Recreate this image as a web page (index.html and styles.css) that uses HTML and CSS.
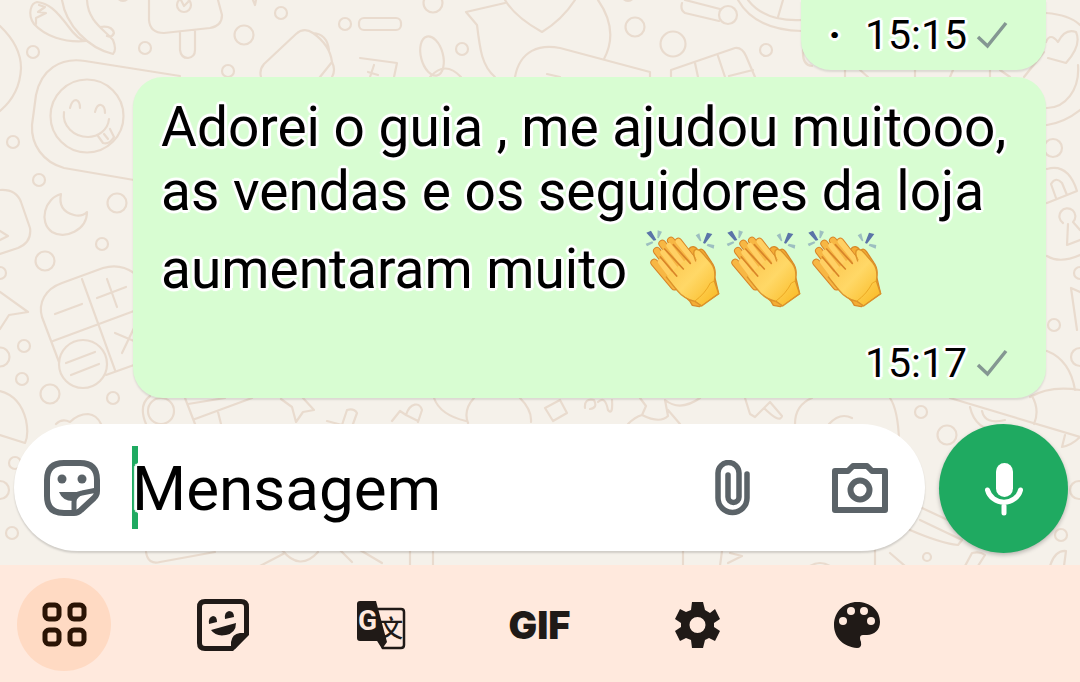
FILE: index.html
```html
<!DOCTYPE html>
<html lang="pt-BR">
<head>
<meta charset="utf-8">
<meta name="viewport" content="width=device-width, initial-scale=1">
<title>Conversa</title>
<link rel="stylesheet" href="styles.css">
</head>
<body>
<svg class="defs" width="0" height="0" aria-hidden="true">
  <defs>
    <linearGradient id="skin" x1="0" y1="0" x2="1" y2="1">
      <stop offset="0" stop-color="#fbc24a"/>
      <stop offset=".5" stop-color="#ffd867"/>
      <stop offset="1" stop-color="#f9b81f"/>
    </linearGradient>
    <symbol id="clap" viewBox="50 28 243 255">
      <path d="M66 57 L80 51 L96 79 L88 81Z M264 61 L248 57 L236 88 L242 90Z" fill="#5b74a8"/>
      <path d="M100 50 L113 54 L103 74 L99 73Z M64 90 L84 83 L87 88 L68 98Z M214 65 L225 59 L231 82 L227 83Z M270 94 L250 90 L247 96 L268 105Z" fill="#9dbfc0"/>
      <g stroke-linecap="round" stroke-linejoin="round">
        <path d="M187 120 Q193 98 207 99 Q217 101 222 112 Q230 100 240 113 L262 146 Q276 165 271 190 L283 240 L225 279 L204 275 L196 262 L120 190Z" fill="#f4ad35" stroke="#d88a28" stroke-width="4"/>
        <path d="M90 147 L150 218 M98 112 L165 200 M114 90 L180 178 M140 81 L195 150 M162 84 L214 152" fill="none" stroke="#d88428" stroke-width="24"/>
        <path d="M90 147 L150 218 M98 112 L165 200 M114 90 L180 178 M140 81 L195 150 M162 84 L214 152" fill="none" stroke="#f7b744" stroke-width="18"/>
        <path d="M108 144 L156 208 M116 116 L172 190 M134 96 L190 170 M162 84 L214 148" fill="none" stroke="#ffd064" stroke-width="16"/>
        <path d="M140 176 L184 138 L216 150 Q222 146 214 132 Q205 112 216 108 Q226 108 234 119 L260 149 Q276 168 270 200 L281 239 L232 275 L212 262 Q180 255 160 229 L128 190Z" fill="url(#skin)"/>
        <path d="M214 142 Q202 112 214 107 Q225 106 234 118 L260 148 Q276 168 270 202 L283 240 L232 277 L212 263 Q180 257 158 230 L126 190" fill="none" stroke="#dc932a" stroke-width="4"/>
        <path d="M108 130 L157 187 M121 106 L177 166 M147 93 L198 149" fill="none" stroke="#d88428" stroke-width="5"/>
        <path d="M212 262 Q242 240 258 208 L270 202" fill="none" stroke="#eca823" stroke-width="3"/>
      </g>
    </symbol>
    <symbol id="check" viewBox="0 0 32 28">
      <path d="M2 16 L11.500 25 L30 2" fill="none" stroke="#849792" stroke-width="3.500"/>
    </symbol>
  </defs>
</svg>

<main class="chat">
  <svg class="wallpaper" width="1080" height="566" viewBox="0 0 1080 566" aria-hidden="true">
    <g fill="none" stroke="#e9dbce" stroke-width="2.200" stroke-linecap="round" stroke-linejoin="round">
      <g>
        <circle cx="33" cy="52" r="6"/><circle cx="145" cy="48" r="6"/><circle cx="244" cy="35" r="9.500"/>
        <circle cx="228" cy="71" r="6"/><circle cx="281" cy="13" r="6"/><circle cx="345" cy="24" r="6"/>
        <circle cx="13" cy="142" r="6"/><circle cx="39" cy="180" r="6"/><circle cx="117" cy="203" r="9.500"/>
        <circle cx="123" cy="-5" r="6"/><circle cx="45" cy="261" r="9.500"/><circle cx="102" cy="244" r="6"/>
        <circle cx="0" cy="273" r="6"/><circle cx="24" cy="346" r="6"/><circle cx="0" cy="357" r="9.500"/>
        <circle cx="22" cy="379" r="6"/><circle cx="50" cy="394" r="9.500"/><circle cx="113" cy="398" r="6"/>
        <circle cx="15" cy="463" r="6"/><circle cx="0" cy="490" r="9"/><circle cx="12" cy="533" r="6"/>
        <circle cx="433" cy="3" r="9.500"/><circle cx="462" cy="49" r="6"/><circle cx="635" cy="27" r="9.500"/>
        <circle cx="673" cy="44" r="12.500"/><circle cx="766" cy="50" r="6"/><circle cx="628" cy="-5" r="6"/>
        <circle cx="921" cy="412" r="6"/><circle cx="947" cy="435" r="9.500"/><circle cx="927" cy="557" r="4"/>
        <circle cx="1061" cy="535" r="6"/><circle cx="1079" cy="490" r="9"/><circle cx="1053" cy="148" r="9"/>
        <circle cx="1054" cy="325" r="6"/><circle cx="1080" cy="273" r="6"/><circle cx="1080" cy="357" r="9"/>
      </g>
      <path d="M0 26 Q21 46 21 68 Q20 94 0 111"/>
      <path d="M34 24 C27 14 31 3 37 2 C48 3 56 10 68 26 Q78 40 86 41 C64 43 45 36 34 24Z M39 5 L45 7 L38 12 L46 13 L36 18 L36 24"/>
      <path d="M62 0 C66 25 88 48 113 54 Q117 50 113 40 C105 30 88 22 87 0 M100 27 Q112 25 114 33 Q112 38 107 36"/>
      <path d="M149 0 V20 Q150 33 164 33 L210 28 Q222 26 222 15 L218 0 M180 33 V50 Q181 58 188 58 Q195 57 195 50 V31"/>
      <circle cx="184" cy="5" r="7"/><path d="M181 0 L184 6 L188 2"/>
      <path d="M180 76 L85 61 C60 57 41 70 36 95 L32 125 C31 145 43 162 64 168 L134 180"/>
      <circle cx="87" cy="116" r="36.500"/>
      <path d="M70 108 Q72 100 76 100 Q80 101 80 108 M95 112 Q97 104 101 105 Q105 106 105 113 M64 112 C62 126 74 137 88 137 C98 137 108 130 109 119 M98 136 L103 143 Q109 145 114 137 L110 129 M104 134 L108 139"/>
      <path d="M261 77 Q259 70 264 64 L296 34 Q304 27 313 33 Q330 45 332 62 L320 77 M313 33 Q327 34 329 50 M332 62 Q336 70 332 77 M253 0 L255 5 L256 0"/>
      <path d="M61 194 C45 198 38 222 52 232 C65 240 87 230 87 212 Q82 217 74 215 C62 212 59 204 61 194Z"/>
      <path d="M0 190 Q16 189 21 202 L30 228 Q32 242 18 248 L0 254 M0 231 L8 236 L0 240 M0 292 L28 312 L9 315 L0 329"/>
      <path d="M134 273 Q120 263 103 268 L62 283 C45 289 38 303 42 317 L59 362 M82 279 L115 370 M53 341 L134 311 M106 375 L134 365 M55 314 L82 304 M97 298 L126 287 M107 279 L117 307 M115 333 L134 341 M134 328 L122 353"/>
      <circle cx="83" cy="364" r="24"/><path d="M66 363 L95 352 M71 375 L99 364"/>
      <path d="M0 391 Q20 396 26 420 Q29 435 25 443 L0 435 M56 424 Q62 418 70 422 Q78 414 88 414 Q97 415 101 424"/>
      <path d="M150 396 Q138 405 146 424 M185 398 L195 424 M188 404 L225 398 M195 419 L252 398 M218 412 L221 424 M281 399 L292 407 L296 422 L303 412 L314 410 L303 398 M327 421 L342 425 L347 410 Q354 408 357 413 L353 424"/>
      <circle cx="161" cy="411" r="13"/>
      <path d="M392 421 L400 411 L406 415 C410 402 420 402 422 410 L418 422 M406 415 L418 421 M434 398 Q440 415 466 421 M474 398 Q463 410 468 423 M520 398 Q532 410 531 422 M545 408 L560 400 L567 413 L553 421Z M585 408 Q584 398 594 400 Q598 408 590 409 M598 402 Q605 395 608 410 Q613 416 612 400"/>
      <path d="M640 398 L646 406 L642 415 Q660 424 668 416 L665 400 Q680 412 700 398 M628 424 Q635 417 642 415 M668 410 L680 424 M745 398 L750 414 L755 417 L770 402 L782 416 Q780 424 764 408 M812 398 Q795 405 795 424 M829 424 Q840 412 852 418"/>
      <rect x="359" y="18" width="42" height="12" rx="5"/>
      <ellipse cx="432" cy="56" rx="11" ry="20" transform="rotate(-15 432 56)"/>
      <path d="M430 77 Q445 60 461 77 M360 58 L397 63 L394 77 M374 65 L370 77 M368 72 L378 75"/>
      <path d="M505 3 L466 12 L477 25 C480 50 482 66 495 77 M505 0 Q515 17 542 32 Q562 20 575 0 M598 0 C612 20 614 40 604 59 M515 77 C520 50 540 44 560 48 L650 72 V77 M547 74 L560 77"/>
      <path d="M685 0 L720 9 M682 3 Q680 10 685 13 L719 21 M738 0 Q755 30 802 31 M748 0 Q765 22 802 20 M783 0 L778 17 M671 77 V70 L735 48 Q742 47 746 56 L755 77 M695 63 L698 77 M718 56 L725 77 M729 76 L753 70 M803 50 Q802 65 812 66"/>
      <circle cx="728" cy="15" r="9"/>
      <path d="M845 70 V77 M860 70 L868 77 M915 70 V77 M953 70 L950 77 M990 70 V77 M1000 70 L1010 77 M1024 77 L1044 52"/>
      <path d="M1046 13 Q1070 15 1080 25 M1046 42 Q1050 32 1058 42 Q1065 28 1076 32 Q1082 45 1066 63 L1048 58 M1078 65 C1080 90 1065 108 1047 108 M1047 125 Q1065 122 1080 110"/>
      <path d="M1047 169 Q1068 163 1077 191 L1047 203 M1056 198 L1051 184 Q1056 176 1062 183 L1067 195 M1063 223 A8 8 0 1 1 1073 222 L1080 230 M1068 224 L1067 245 L1080 240 M1047 256 Q1060 264 1080 255 M1080 292 L1071 288 L1077 330 M1047 351 Q1070 360 1075 390 M1030 397 Q1050 385 1080 390"/>
      <path d="M890 398 Q898 410 899 440 M950 398 L1080 437 M970 407 Q975 430 1000 432 M982 411 Q985 425 1005 420 M1032 396 Q1040 410 1034 424 M1065 435 L1062 447 Q1072 445 1080 437 M922 508 L965 528 M910 530 Q940 543 958 545 L962 540 L920 520"/>
      <path d="M965 566 L972 553 Q980 551 985 555 L978 566 M1050 566 Q1055 550 1066 551 L1064 566 M722 551 L720 566 M730 553 L742 556 L728 563 M875 550 V566 M890 553 L905 566 M683 550 V566 M810 566 Q820 560 830 566 M146 552 Q148 565 160 562 L215 552 M260 566 L285 553 M282 550 Q300 572 318 552 M340 550 L352 562 M360 550 L382 563 M410 550 V566 M433 552 V566"/>
    </g>
  </svg>

  <section class="messages" aria-label="Mensagens">
    <article class="bubble bubble-cut">
      <p class="meta"><span class="dot">·</span><time>15:15</time><svg class="check" role="img" aria-label="Enviada"><use href="#check"/></svg></p>
    </article>
    <article class="bubble bubble-full">
      <p class="text">Adorei o guia , me ajudou muitooo, as vendas e os seguidores da loja aumentaram muito <span class="claps" role="img" aria-label="Aplausos"><svg class="clap"><use href="#clap"/></svg><svg class="clap"><use href="#clap"/></svg><svg class="clap"><use href="#clap"/></svg></span></p>
      <p class="meta"><time>15:17</time><svg class="check" role="img" aria-label="Enviada"><use href="#check"/></svg></p>
    </article>
  </section>

  <form class="composer">
    <div class="field">
      <button type="button" class="icon-button" aria-label="Figurinhas">
        <svg width="56" height="56" viewBox="0 0 56 56" fill="none" stroke="#5b6368" stroke-width="6" stroke-linejoin="round">
          <path d="M20 3 H36 Q53 3 53 20 V31 Q53 35 50 38 L37 50 Q34 53 30 53 H20 Q3 53 3 36 V20 Q3 3 20 3Z"/>
          <path d="M30 53 V42 Q30 34 38 33 L53 30" stroke-width="5"/>
          <path d="M15 32 H40 L31 41 Q19 42 15 32Z" fill="#5b6368" stroke="none"/>
          <g fill="#5b6368" stroke="none"><circle cx="18" cy="19" r="4.500"/><circle cx="38" cy="19" r="4.500"/></g>
        </svg>
      </button>
      <div class="entry">
        <span class="caret" aria-hidden="true"></span>
        <input class="input" type="text" placeholder="Mensagem" aria-label="Mensagem">
      </div>
      <button type="button" class="icon-button clip" aria-label="Anexar">
        <svg width="36" height="56" viewBox="0 0 36 56" fill="none" stroke="#5b6368" stroke-width="5.500" stroke-linecap="round">
          <path d="M32 14 V38 A14.500 14.500 0 0 1 3 38 V13 A10 10 0 0 1 24 13 V37 A5 5 0 0 1 13 37 V15"/>
        </svg>
      </button>
      <button type="button" class="icon-button" aria-label="Câmera">
        <svg width="56" height="52" viewBox="0 0 56 52" fill="none" stroke="#5b6368" stroke-width="6" stroke-linejoin="round">
          <path d="M3 9 H16 L21 4 H35 L40 9 H53 V48 H3Z"/><circle cx="28" cy="28" r="9.500"/>
        </svg>
      </button>
    </div>
    <button type="button" class="mic" aria-label="Gravar áudio">
      <svg width="40" height="54" viewBox="0 0 40 54" fill="none" stroke="#fff" stroke-width="5" stroke-linecap="round">
        <rect x="12" y="1" width="17" height="34" rx="8.500" fill="#fff" stroke="none"/>
        <path d="M3.500 28 A17 16 0 0 0 36.500 28 M20 44 V51"/>
      </svg>
    </button>
  </form>
</main>

<nav class="keyboard-bar" aria-label="Teclado">
  <button type="button" class="tool tool-active" aria-label="Menu">
    <svg width="45" height="45" viewBox="0 0 45 45" fill="none" stroke="#2b1405" stroke-width="5">
      <rect x="3" y="3" width="14" height="14" rx="4"/><rect x="28" y="3" width="14" height="14" rx="4"/>
      <rect x="3" y="28" width="14" height="14" rx="4"/><rect x="28" y="28" width="14" height="14" rx="4"/>
    </svg>
  </button>
  <button type="button" class="tool" aria-label="Adesivos">
    <svg width="52" height="52" viewBox="0 0 52 52" fill="#201a17">
      <path d="M8 2.500 H44 Q49.500 2.500 49.500 8 V35 L35 49.500 H8 Q2.500 49.500 2.500 44 V8 Q2.500 2.500 8 2.500Z" fill="none" stroke="#201a17" stroke-width="5"/>
      <path d="M34 50 V43 Q35 35 43 34 H50 V37 L38 50Z"/>
      <path d="M14 31 L39 24 Q39 34 29 36 Q19 38 14 31Z M12 25 Q11 18 16 17 Q20 17 20 23Z M28 20 Q27 13 32 12 Q37 12 37 18Z"/>
    </svg>
  </button>
  <button type="button" class="tool" aria-label="Traduzir">
    <svg width="50" height="50" viewBox="0 0 50 50">
      <path d="M22 9 H45 Q48 9 48 12 V45 Q48 48 45 48 H27 L22 40" fill="none" stroke="#201a17" stroke-width="2.500"/>
      <path d="M4 1 H20 L31 42 L26 49 L23 41 H4 Q1 41 1 38 V4 Q1 1 4 1Z" fill="#201a17"/>
      <text class="glyph-wen" x="23" y="37">文</text>
      <text class="glyph-g" x="2" y="30">G</text>
    </svg>
  </button>
  <button type="button" class="tool tool-gif">GIF</button>
  <button type="button" class="tool" aria-label="Configurações">
    <svg width="46" height="46" viewBox="0 0 46 46" fill="#201a17">
      <path fill-rule="evenodd" d="M17 0 H28 L30 8 L35 11 L40 7 L45 17 L39 21 V25 L45 29 L40 39 L34 36 L30 38 L28 46 H17 L16 38 L11 36 L5 39 L0 29 L6 25 V21 L0 17 L5 7 L11 10 L16 8Z M22.500 15 A8 8 0 1 0 22.500 31 A8 8 0 1 0 22.500 15Z"/>
    </svg>
  </button>
  <button type="button" class="tool" aria-label="Temas">
    <svg width="46" height="46" viewBox="0 0 46 46">
      <path d="M23 0 C36 0 46 8 46 20 C46 28 40 33 33 33 H29 Q26 33 26 36 Q26 38 27 40 Q28 46 23 46 C10 45 0 36 0 23 C0 9 11 0 23 0Z" fill="#201a17"/>
      <g fill="#ffe9dd"><circle cx="9" cy="19" r="4"/><circle cx="17" cy="9" r="4"/><circle cx="30" cy="9" r="4"/><circle cx="37" cy="19" r="4"/></g>
    </svg>
  </button>
</nav>
</body>
</html>
```
FILE: styles.css
```css
* {
  box-sizing: border-box;
}

body {
  margin: 0;
  min-height: 100vh;
  display: flex;
  flex-direction: column;
  overflow-x: hidden;
  background: #ffe9dd;
  color: #000;
  font-family: Roboto, "Noto Sans CJK SC", sans-serif;
}

button {
  padding: 0;
  border: 0;
  background: none;
  color: inherit;
  font: inherit;
}

svg {
  display: block;
}

.defs {
  position: absolute;
}

.chat {
  position: relative;
  flex: 1;
  display: flex;
  flex-direction: column;
  overflow: hidden;
  background: #f5f1ea;
}

.wallpaper {
  position: absolute;
  top: 0;
  left: 0;
}

.messages {
  position: relative;
  flex: 1;
  display: flex;
  flex-direction: column;
  align-items: flex-end;
  gap: 7px;
  padding: 0 34px 0 133px;
}

.bubble {
  padding: 18px 28px 11px;
  border-radius: 30px;
  background: #d8fdd2;
  box-shadow: 0 2px 2px rgba(0, 0, 0, 0.1);
}

.bubble-cut {
  padding-top: 11px;
  border-radius: 0 0 30px 30px;
}

.bubble-full {
  width: 100%;
}

.text,
.meta,
.input::placeholder {
  text-shadow:
    3px 0 1px #fff, -3px 0 1px #fff, 0 3px 1px #fff, 0 -3px 1px #fff,
    2px 2px 1px #fff, -2px 2px 1px #fff, 2px -2px 1px #fff, -2px -2px 1px #fff;
}

.text {
  margin: 0;
  font-size: 55px;
  line-height: 64px;
}

.claps {
  display: inline-flex;
  vertical-align: -20px;
}

.clap {
  width: 81px;
  height: 85px;
}

.meta {
  display: flex;
  align-items: center;
  justify-content: flex-end;
  gap: 9px;
  margin: 0;
  padding-right: 10px;
  font-size: 41px;
  line-height: 48px;
}

.bubble-full .meta {
  margin-top: 31px;
}

.dot {
  margin-right: 15px;
  font-weight: 700;
}

.check {
  width: 32px;
  height: 28px;
}

.composer {
  position: relative;
  display: flex;
  align-items: flex-start;
  gap: 14px;
  margin: 0;
  padding: 25px 12px 12px 14px;
}

.field {
  flex: 1;
  min-width: 0;
  display: flex;
  align-items: center;
  height: 127px;
  padding: 0 37px 0 30px;
  border-radius: 64px;
  background: #fff;
  box-shadow: 0 2px 2px rgba(0, 0, 0, 0.15);
}

.icon-button {
  flex: none;
}

.entry {
  position: relative;
  flex: 1;
  min-width: 0;
  margin-left: 32px;
}

.caret {
  position: absolute;
  top: 0;
  left: 0;
  width: 6px;
  height: 83px;
  background: #1faa61;
}

.input {
  position: relative;
  display: block;
  width: 100%;
  height: 83px;
  padding: 2px 0 0;
  border: 0;
  outline: 0;
  background: transparent;
  color: #000;
  font: 62px Roboto, sans-serif;
}

.input::placeholder {
  color: #000;
  opacity: 1;
}

.clip {
  margin-right: 81px;
}

.mic {
  flex: none;
  display: grid;
  place-items: center;
  width: 129px;
  height: 129px;
  border-radius: 50%;
  background: #1faa61;
  box-shadow: 0 2px 4px rgba(0, 0, 0, 0.25);
}

.keyboard-bar {
  display: grid;
  grid-template-columns: repeat(7, 94px);
  justify-content: space-between;
  padding: 13px 18px 11px 17px;
  background: #ffe9dd;
  color: #201a17;
}

.tool {
  display: grid;
  place-items: center;
  height: 93px;
  border-radius: 50%;
}

.tool-active {
  background: #ffdac3;
}

.tool-gif {
  font: 900 38px Inter, sans-serif;
}

.glyph-g {
  fill: #ffe9dd;
  font: 700 28px Roboto, sans-serif;
}

.glyph-wen {
  fill: #201a17;
  font: 500 24px "Noto Sans CJK SC", sans-serif;
}
```
